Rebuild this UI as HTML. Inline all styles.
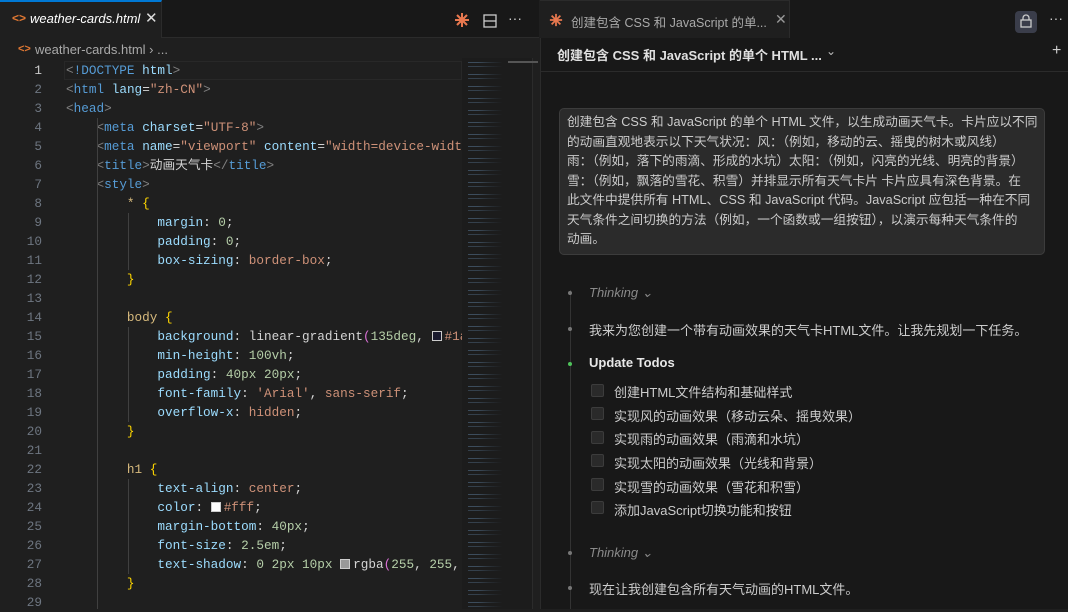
<!DOCTYPE html>
<html><head><meta charset="utf-8"><style>
*{margin:0;padding:0;box-sizing:border-box}
body{width:1068px;height:609px;overflow:hidden;background:#1f1f1f;font-family:"Liberation Sans","Noto Sans CJK SC",sans-serif;position:relative;color:#ccc}
.abs{position:absolute}
#left{left:0;top:0;width:539px;height:609px;background:#1f1f1f}
#tabs{left:0;top:0;width:539px;height:38px;background:#181818;border-bottom:1px solid #2b2b2b}
#tab1{left:0;top:0;width:162px;height:38px;background:#1f1f1f;border-top:2px solid #0078d4;border-right:1px solid #2b2b2b}
.code{font-family:"Liberation Mono",monospace;font-size:12.7px;white-space:pre;line-height:19px}
.ln{left:0;width:42px;text-align:right;color:#6e7681}
.t{color:#569cd6}.g{color:#808080}.a{color:#9cdcfe}.s{color:#ce9178}.y{color:#d7ba7d}.b{color:#ffd700}.n{color:#b5cea8}.w{color:#d4d4d4}.p{color:#da70d6}
#right{left:540px;top:0;width:528px;height:609px;background:#181818;border-left:1px solid #2b2b2b}
.cn{font-size:13px;color:#cccccc}
.cb{display:inline-block;width:13px;height:13px;border:1px solid #3c3c3c;background:#2a2a2a;border-radius:2px;position:absolute;left:591px}
.dot{width:4px;height:4px;border-radius:2px;background:#777;left:568px}
.sw{display:inline-block;width:10px;height:10px;border:1px solid #ccc;vertical-align:-1px;margin-right:3px}
</style></head><body>
<div id="left" class="abs">
<div id="tabs" class="abs"></div>
<div id="tab1" class="abs">
<span class="abs" style="left:12px;top:9px;color:#e37933;font-size:12px;font-weight:bold">&lt;&gt;</span>
<span class="abs" style="left:30px;top:9px;color:#fff;font-style:italic;font-size:13px">weather-cards.html</span>
<span class="abs" style="left:145px;top:7px;color:#ddd;font-size:15px">✕</span>
</div>
<svg class="abs" style="left:454px;top:12px" width="16" height="16" viewBox="0 0 16 16"><g stroke="#e8784f" stroke-width="2"><line x1="8" y1="1" x2="8" y2="15"/><line x1="1" y1="8" x2="15" y2="8"/><line x1="3" y1="3" x2="13" y2="13"/><line x1="13" y1="3" x2="3" y2="13"/></g><circle cx="8" cy="8" r="3" fill="#e8784f"/></svg>
<svg class="abs" style="left:483px;top:14px" width="14" height="14"><rect x="1" y="1" width="12" height="12" fill="none" stroke="#ccc" stroke-width="1.3"/><line x1="1" y1="7" x2="13" y2="7" stroke="#ccc" stroke-width="1.3"/></svg>
<span class="abs" style="left:508px;top:10px;color:#ccc;font-size:14px">···</span>
<span class="abs" style="left:18px;top:43px;color:#e37933;font-size:11px;font-weight:bold">&lt;&gt;</span>
<span class="abs" style="left:35px;top:42px;color:#a9a9a9;font-size:13px">weather-cards.html › ...</span>
<div class="abs" style="left:64px;top:61px;width:398px;height:19px;border:1px solid #282828"></div>
<div class="abs code ln" style="top:61px"><span style="color:#ccc">1</span>
2
3
4
5
6
7
8
9
10
11
12
13
14
15
16
17
18
19
20
21
22
23
24
25
26
27
28
29</div>
<div class="abs code" style="left:66px;top:61px;width:396px;overflow:hidden"><span class="g">&lt;</span><span class="t">!DOCTYPE</span> <span class="a">html</span><span class="g">&gt;</span>
<span class="g">&lt;</span><span class="t">html</span> <span class="a">lang</span><span class="w">=</span><span class="s">"zh-CN"</span><span class="g">&gt;</span>
<span class="g">&lt;</span><span class="t">head</span><span class="g">&gt;</span>
    <span class="g">&lt;</span><span class="t">meta</span> <span class="a">charset</span><span class="w">=</span><span class="s">"UTF-8"</span><span class="g">&gt;</span>
    <span class="g">&lt;</span><span class="t">meta</span> <span class="a">name</span><span class="w">=</span><span class="s">"viewport"</span> <span class="a">content</span><span class="w">=</span><span class="s">"width=device-width</span>
    <span class="g">&lt;</span><span class="t">title</span><span class="g">&gt;</span><span class="w">动画天气卡</span><span class="g">&lt;/</span><span class="t">title</span><span class="g">&gt;</span>
    <span class="g">&lt;</span><span class="t">style</span><span class="g">&gt;</span>
        <span class="y">*</span> <span class="b">{</span>
            <span class="a">margin</span><span class="w">: </span><span class="n">0</span><span class="w">;</span>
            <span class="a">padding</span><span class="w">: </span><span class="n">0</span><span class="w">;</span>
            <span class="a">box-sizing</span><span class="w">: </span><span class="s">border-box</span><span class="w">;</span>
        <span class="b">}</span>

        <span class="y">body</span> <span class="b">{</span>
            <span class="a">background</span><span class="w">: linear-gradient</span><span class="p">(</span><span class="n">135deg</span><span class="w">, </span><span class="sw" style="background:#1a1a2e"></span><span class="s">#1a1a2e</span>
            <span class="a">min-height</span><span class="w">: </span><span class="n">100vh</span><span class="w">;</span>
            <span class="a">padding</span><span class="w">: </span><span class="n">40px 20px</span><span class="w">;</span>
            <span class="a">font-family</span><span class="w">: </span><span class="s">'Arial'</span><span class="w">, </span><span class="s">sans-serif</span><span class="w">;</span>
            <span class="a">overflow-x</span><span class="w">: </span><span class="s">hidden</span><span class="w">;</span>
        <span class="b">}</span>

        <span class="y">h1</span> <span class="b">{</span>
            <span class="a">text-align</span><span class="w">: </span><span class="s">center</span><span class="w">;</span>
            <span class="a">color</span><span class="w">: </span><span class="sw" style="background:#fff"></span><span class="s">#fff</span><span class="w">;</span>
            <span class="a">margin-bottom</span><span class="w">: </span><span class="n">40px</span><span class="w">;</span>
            <span class="a">font-size</span><span class="w">: </span><span class="n">2.5em</span><span class="w">;</span>
            <span class="a">text-shadow</span><span class="w">: </span><span class="n">0 2px 10px</span> <span class="sw" style="background:#999"></span><span class="w">rgba</span><span class="p">(</span><span class="n">255</span><span class="w">, </span><span class="n">255</span><span class="w">,</span>
        <span class="b">}</span>
</div>
<div class="abs" style="left:97px;top:118px;width:1px;height:491px;background:#404040"></div>
<div class="abs" style="left:128px;top:213px;width:1px;height:57px;background:#404040"></div>
<div class="abs" style="left:128px;top:327px;width:1px;height:95px;background:#404040"></div>
<div class="abs" style="left:128px;top:479px;width:1px;height:95px;background:#404040"></div>
<div class="abs" style="left:462px;top:58px;width:70px;height:551px;background:#1c1c1c"></div>
<div class="abs" style="left:468px;top:62px;width:50px;height:545px;
background-image:repeating-linear-gradient(180deg,rgba(110,150,190,.4) 0 1px,transparent 1px 4px,rgba(110,150,190,.3) 4px 5px,transparent 5px 12px);-webkit-mask:linear-gradient(90deg,#000 0 20%,rgba(0,0,0,.5) 40%,transparent 70%)"></div>
<div class="abs" style="left:532px;top:58px;width:7px;height:551px;background:#1f1f1f;border-left:1px solid #2b2b2b"></div>
<div class="abs" style="left:508px;top:61px;width:30px;height:2px;background:#555"></div>
</div>

<div id="right" class="abs"></div>
<div class="abs" style="left:540px;top:0;width:250px;height:38px;background:#1f1f1f;border-right:1px solid #2b2b2b;border-top:1px solid #2b2b2b"></div>
<svg class="abs" style="left:549px;top:13px" width="14" height="14" viewBox="0 0 16 16"><g stroke="#e8784f" stroke-width="2"><line x1="8" y1="1" x2="8" y2="15"/><line x1="1" y1="8" x2="15" y2="8"/><line x1="3" y1="3" x2="13" y2="13"/><line x1="13" y1="3" x2="3" y2="13"/></g></svg>
<span class="abs" style="left:571px;top:12px;color:#a9a9a9;font-size:12.5px">创建包含 CSS 和 JavaScript 的单...</span>
<span class="abs" style="left:775px;top:11px;color:#999;font-size:14px">✕</span>
<div class="abs" style="left:1015px;top:11px;width:22px;height:22px;border-radius:4px;background:#3a3d4a"></div>
<svg class="abs" style="left:1019px;top:13px" width="14" height="16"><path d="M4 7V5a3 3 0 0 1 6 0v2" fill="none" stroke="#ccc" stroke-width="1.3"/><rect x="2" y="7" width="10" height="7" fill="none" stroke="#ccc" stroke-width="1.3"/></svg>
<span class="abs" style="left:1049px;top:10px;color:#ccc;font-size:14px">···</span>
<div class="abs" style="left:540px;top:71px;width:528px;height:1px;background:#2b2b2b"></div>
<span class="abs" style="left:557px;top:45px;color:#e0e0e0;font-size:13px;font-weight:bold">创建包含 CSS 和 JavaScript 的单个 HTML ...</span>
<span class="abs" style="left:826px;top:44px;color:#bbb;font-size:12px">⌄</span>
<span class="abs" style="left:1052px;top:42px;color:#ccc;font-size:16px">+</span>

<div class="abs" style="left:559px;top:108px;width:486px;height:147px;background:#2b2b2b;border:1px solid #3c3c3c;border-radius:5px;padding:4px 0 0 7px;line-height:19.5px;white-space:nowrap;font-size:12.7px;color:#ccc">创建包含 CSS 和 JavaScript 的单个 HTML 文件，以生成动画天气卡。卡片应以不同<br>的动画直观地表示以下天气状况：风：（例如，移动的云、摇曳的树木或风线）<br>雨：（例如，落下的雨滴、形成的水坑）太阳：（例如，闪亮的光线、明亮的背景）<br>雪：（例如，飘落的雪花、积雪）并排显示所有天气卡片 卡片应具有深色背景。在<br>此文件中提供所有 HTML、CSS 和 JavaScript 代码。JavaScript 应包括一种在不同<br>天气条件之间切换的方法（例如，一个函数或一组按钮），以演示每种天气条件的<br>动画。</div>

<div class="abs" style="left:570px;top:290px;width:1px;height:319px;background:#333"></div>
<div class="abs dot" style="top:291px"></div>
<span class="abs" style="left:589px;top:285px;color:#8a8a8a;font-style:italic;font-size:13px">Thinking ⌄</span>
<div class="abs dot" style="top:327px"></div>
<span class="abs cn" style="left:589px;top:320px">我来为您创建一个带有动画效果的天气卡HTML文件。让我先规划一下任务。</span>
<div class="abs dot" style="top:362px;background:#4ec25a"></div>
<span class="abs" style="left:589px;top:355px;color:#e8e8e8;font-size:13px;font-weight:bold">Update Todos</span>
<span class="cb" style="top:384px"></span><span class="abs cn" style="left:614px;top:382px">创建HTML文件结构和基础样式</span>
<span class="cb" style="top:407px"></span><span class="abs cn" style="left:614px;top:406px">实现风的动画效果（移动云朵、摇曳效果）</span>
<span class="cb" style="top:431px"></span><span class="abs cn" style="left:614px;top:429px">实现雨的动画效果（雨滴和水坑）</span>
<span class="cb" style="top:454px"></span><span class="abs cn" style="left:614px;top:453px">实现太阳的动画效果（光线和背景）</span>
<span class="cb" style="top:478px"></span><span class="abs cn" style="left:614px;top:477px">实现雪的动画效果（雪花和积雪）</span>
<span class="cb" style="top:501px"></span><span class="abs cn" style="left:614px;top:500px">添加JavaScript切换功能和按钮</span>
<div class="abs dot" style="top:551px"></div>
<span class="abs" style="left:589px;top:545px;color:#8a8a8a;font-style:italic;font-size:13px">Thinking ⌄</span>
<div class="abs dot" style="top:586px"></div>
<span class="abs cn" style="left:589px;top:579px">现在让我创建包含所有天气动画的HTML文件。</span>
</body></html>
